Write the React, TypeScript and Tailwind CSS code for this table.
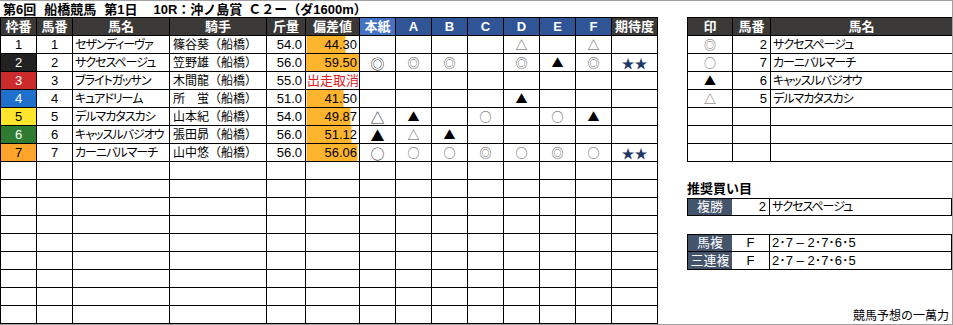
import React from 'react';

type Horse = {
  waku: number;
  num: number;
  name: string;
  jockey: string;
  weight: string;
  score: string;
  bar: number;
  marks: string[];
};

const wakuColors: Record<number, string> = {
  1: 'bg-white text-black',
  2: 'bg-[#222222] text-white',
  3: 'bg-[#cc2b2b] text-white',
  4: 'bg-[#1f6fcc] text-white',
  5: 'bg-[#ffe52c] text-black',
  6: 'bg-[#2e7b32] text-white',
  7: 'bg-[#ffa52c] text-black',
};

// 本紙, A, B, C, D, E, F, 期待度
const horses: Horse[] = [
  { waku: 1, num: 1, name: 'セザンディーヴァ', jockey: '篠谷葵（船橋）', weight: '54.0', score: '44.30', bar: 39, marks: ['', '', '', '', '△', '', '△', ''] },
  { waku: 2, num: 2, name: 'サクセスページュ', jockey: '笠野雄（船橋）', weight: '56.0', score: '59.50', bar: 53, marks: ['◎', '◎', '◎', '', '◎', '▲', '◎', '★★'] },
  { waku: 3, num: 3, name: 'ブライトガッサン', jockey: '木間龍（船橋）', weight: '55.0', score: '出走取消', bar: 0, marks: ['', '', '', '', '', '', '', ''] },
  { waku: 4, num: 4, name: 'キュアドリーム', jockey: '所　蛍（船橋）', weight: '51.0', score: '41.50', bar: 37, marks: ['', '', '', '', '▲', '', '', ''] },
  { waku: 5, num: 5, name: 'デルマカタスカシ', jockey: '山本紀（船橋）', weight: '54.0', score: '49.87', bar: 44, marks: ['△', '▲', '', '○', '', '○', '▲', ''] },
  { waku: 6, num: 6, name: 'キャッスルバジオウ', jockey: '張田昴（船橋）', weight: '56.0', score: '51.12', bar: 45, marks: ['▲', '△', '▲', '', '', '', '', ''] },
  { waku: 7, num: 7, name: 'カーニバルマーチ', jockey: '山中悠（船橋）', weight: '56.0', score: '56.06', bar: 51, marks: ['○', '○', '○', '◎', '○', '◎', '○', '★★'] },
];

const picks = [
  { mark: '◎', num: 2, name: 'サクセスページュ' },
  { mark: '○', num: 7, name: 'カーニバルマーチ' },
  { mark: '▲', num: 6, name: 'キャッスルバジオウ' },
  { mark: '△', num: 5, name: 'デルマカタスカシ' },
];

const markColor = (m: string, main: boolean) => {
  if (m === '★★') return 'text-[#1f3864] text-[13px]';
  if (m === '▲') return 'text-black';
  return main ? 'text-[#333333]' : 'text-[#555555]';
};

const td = 'border border-black p-0 leading-none';
const th = 'border border-black p-0 leading-none font-bold text-white';
const cjk = "font-['Noto_Sans_CJK_JP',sans-serif]";
const kana = "[font-feature-settings:'palt'] text-[12px] tracking-[-1px] whitespace-nowrap overflow-hidden";

const MainTable = () => (
  <table className="table-fixed border-collapse w-[658px] text-[13px]">
    <colgroup>
      <col className="w-[36px]" />
      <col className="w-[36px]" />
      <col className="w-[97px]" />
      <col className="w-[97px]" />
      <col className="w-[39px]" />
      <col className="w-[54px]" />
      <col className="w-[36px]" />
      <col className="w-[36px]" />
      <col className="w-[36px]" />
      <col className="w-[36px]" />
      <col className="w-[36px]" />
      <col className="w-[36px]" />
      <col className="w-[36px]" />
      <col className="w-[46px]" />
    </colgroup>
    <thead>
      <tr className="h-[18px]">
        <th className={`${th} bg-[#3b3838]`}>枠番</th>
        <th className={`${th} bg-[#3b3838]`}>馬番</th>
        <th className={`${th} bg-[#3b3838]`}>馬名</th>
        <th className={`${th} bg-[#3b3838]`}>騎手</th>
        <th className={`${th} bg-[#3b3838]`}>斤量</th>
        <th className={`${th} bg-[#3b3838]`}>偏差値</th>
        <th className={`${th} bg-[#4472c4]`}>本紙</th>
        <th className={`${th} bg-[#2f5597]`}>A</th>
        <th className={`${th} bg-[#2f5597]`}>B</th>
        <th className={`${th} bg-[#2f5597]`}>C</th>
        <th className={`${th} bg-[#2f5597]`}>D</th>
        <th className={`${th} bg-[#2f5597]`}>E</th>
        <th className={`${th} bg-[#2f5597]`}>F</th>
        <th className={`${th} bg-[#3b3838]`}>期待度</th>
      </tr>
    </thead>
    <tbody>
      {horses.map(h => (
        <tr key={h.num} className="h-[18px]">
          <td className={`${td} text-center ${wakuColors[h.waku]}`}>{h.waku}</td>
          <td className={`${td} text-center`}>{h.num}</td>
          <td className={`${td} pl-[2px] ${kana}`}>{h.name}</td>
          <td className={`${td} pl-[3px] text-[12px] whitespace-nowrap overflow-hidden`}>{h.jockey}</td>
          <td className={`${td} text-right pr-[3px]`}>{h.weight}</td>
          {h.bar > 0 ? (
            <td
              className={`${td} text-right pr-[2px]`}
              style={{ background: `linear-gradient(to right, #ffb42e ${h.bar}px, #ffffff ${h.bar}px)` }}
            >
              {h.score}
            </td>
          ) : (
            <td className={`${td} pl-[1px] text-[#e02020] whitespace-nowrap`}>{h.score}</td>
          )}
          {h.marks.map((m, i) => (
            <td key={i} className={`${td} ${cjk} text-center ${i === 0 ? 'text-[14px]' : 'text-[12px]'} ${markColor(m, i === 0)}`}>
              {m}
            </td>
          ))}
        </tr>
      ))}
      {Array.from({ length: 9 }).map((_, r) => (
        <tr key={`e${r}`} className="h-[18px]">
          {Array.from({ length: 14 }).map((__, c) => (
            <td key={c} className={td} />
          ))}
        </tr>
      ))}
    </tbody>
  </table>
);

const SidePanel = () => (
  <div className="flex flex-col w-[265px] text-[12px]">
    <table className="table-fixed border-collapse w-[265px]">
      <colgroup>
        <col className="w-[45px]" />
        <col className="w-[38px]" />
        <col className="w-[182px]" />
      </colgroup>
      <thead>
        <tr className="h-[18px]">
          <th className={`${th} bg-[#3b3838] text-[13px]`}>印</th>
          <th className={`${th} bg-[#3b3838] text-[13px]`}>馬番</th>
          <th className={`${th} bg-[#3b3838] text-[13px]`}>馬名</th>
        </tr>
      </thead>
      <tbody>
        {picks.map(p => (
          <tr key={p.num} className="h-[18px]">
            <td className={`${td} ${cjk} text-center ${p.mark === '▲' ? 'text-black' : 'text-[#666666]'}`}>{p.mark}</td>
            <td className={`${td} text-right pr-[3px] text-[13px]`}>{p.num}</td>
            <td className={`${td} pl-[2px] ${kana}`}>{p.name}</td>
          </tr>
        ))}
        {Array.from({ length: 3 }).map((_, r) => (
          <tr key={`pe${r}`} className="h-[18px]">
            <td className={td} />
            <td className={td} />
            <td className={td} />
          </tr>
        ))}
      </tbody>
    </table>

    <div className="h-[18px]" />
    <div className="h-[18px] flex items-center font-bold text-[13px]">推奨買い目</div>

    <div className="flex h-[18px] border border-black">
      <div className="w-[44px] bg-[#44546a] text-white flex items-center justify-center text-[13px]">複勝</div>
      <div className="w-[38px] flex items-center justify-end pr-[3px] text-[13px] border-r border-black">2</div>
      <div className={`flex-1 flex items-center pl-[2px] ${kana}`}>サクセスページュ</div>
    </div>

    <div className="h-[18px]" />

    <div className="flex flex-col border border-black">
      {['馬複', '三連複'].map((label, i) => (
        <div key={label} className={`flex h-[17px] ${i === 0 ? 'border-b border-black' : ''}`}>
          <div className="w-[44px] bg-[#44546a] text-white flex items-center justify-center text-[13px]">{label}</div>
          <div className="w-[38px] flex items-center justify-center text-[13px] border-r border-black">F</div>
          <div className="flex-1 flex items-center pl-[2px] text-[13px]">2･7 – 2･7･6･5</div>
        </div>
      ))}
    </div>

    <div className="flex-1" />
    <div className="flex justify-end pr-[3px] pb-[2px] text-[12px] leading-none">競馬予想の一萬力</div>
  </div>
);

export default function App() {
  return (
    <div className="w-[953px] h-[325px] bg-white border-t border-r border-b border-[#a0a0a0] flex flex-col font-['Liberation_Sans','Noto_Sans_CJK_JP',sans-serif] text-black overflow-hidden">
      <div className="h-[17px] flex items-center font-bold text-[13px] leading-none whitespace-nowrap pl-[3px]">
        <span>第6回</span>
        <span className="ml-[8px]">船橋競馬</span>
        <span className="ml-[8px]">第1日</span>
        <span className="ml-[16px]">10R：沖ノ島賞</span>
        <span className="ml-[6px]">Ｃ２ー（ダ1600m）</span>
      </div>
      <div className="flex flex-1">
        <MainTable />
        <div className="ml-[29px] flex">
          <SidePanel />
        </div>
      </div>
    </div>
  );
}
